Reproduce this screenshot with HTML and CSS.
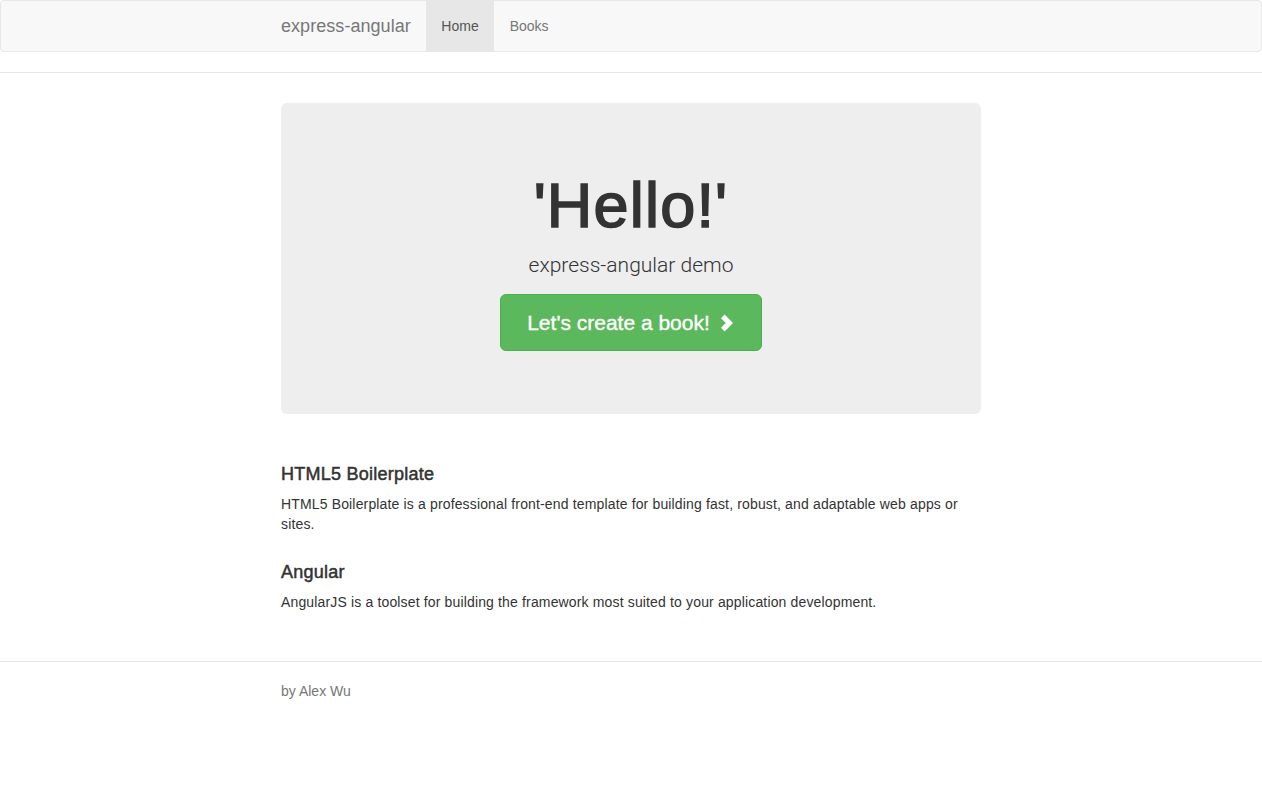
FILE: index.html
```html
<!DOCTYPE html>
<html lang="en">
<head>
<meta charset="utf-8">
<title>express-angular</title>
<link rel="stylesheet" href="styles.css">
</head>
<body>
<div class="header">
  <nav class="navbar">
    <div class="container nav-inner">
      <a class="brand" href="#">express-angular</a>
      <ul class="nav">
        <li class="active"><a href="#">Home</a></li>
        <li><a href="#">Books</a></li>
      </ul>
    </div>
  </nav>
</div>

<div class="container">
  <div class="jumbotron">
    <h1>'Hello!'</h1>
    <p class="lead">express-angular demo</p>
    <div class="cta">
      <a class="btn" href="#">Let's create a book!
        <svg class="chev" width="14" height="18" viewBox="0 0 14 18" aria-hidden="true"><polygon points="1,4.2 4.6,0.6 13,9 4.6,17.4 1,13.8 5.8,9" fill="#fff"/></svg>
      </a>
    </div>
  </div>

  <div class="marketing">
    <h4>HTML5 Boilerplate</h4>
    <p>HTML5 Boilerplate is a professional front-end template for building fast, robust, and adaptable web apps or sites.</p>
    <h4>Angular</h4>
    <p>AngularJS is a toolset for building the framework most suited to your application development.</p>
  </div>
</div>

<div class="footer">
  <div class="container">
    <p>by Alex Wu</p>
  </div>
</div>
</body>
</html>
```

FILE: styles.css
```css
* { box-sizing: border-box; }

body {
  margin: 0;
  font-family: "Liberation Sans", Arial, sans-serif;
  font-size: 14px;
  line-height: 20px;
  color: #333;
  background: #fff;
}

a { text-decoration: none; }

.container {
  width: 730px;
  margin: 0 auto;
  padding: 0 15px;
}

.header {
  border-bottom: 1px solid #e5e5e5;
}

.navbar {
  margin-bottom: 20px;
  background: #f8f8f8;
  border: 1px solid #e7e7e7;
  border-radius: 4px;
  height: 52px;
}

.nav-inner {
  display: flex;
  align-items: stretch;
  height: 50px;
}

.brand {
  margin-left: -15px;
  padding: 15px;
  font-size: 18px;
  line-height: 20px;
  letter-spacing: 0.05px;
  color: #777;
}

.nav {
  display: flex;
  list-style: none;
  margin: 0;
  padding: 0;
}

.nav a {
  display: block;
  padding: 15px 15.5px;
  line-height: 20px;
  color: #777;
}

.nav .active a {
  background: #e7e7e7;
  color: #555;
}

.jumbotron {
  margin-top: 30px;
  margin-bottom: 30px;
  padding: 48px 60px;
  background: #eee;
  border-radius: 6px;
  text-align: center;
}

.jumbotron h1 {
  margin: 20px 0 10px;
  font-size: 63px;
  line-height: 69px;
  font-weight: 400;
  letter-spacing: 1.2px;
  -webkit-text-stroke: 1.6px #333;
  color: #333;
}

.lead {
  margin: 0 0 14px;
  font-family: Roboto, "Liberation Sans", sans-serif;
  font-size: 21px;
  line-height: 30px;
  font-weight: 300;
  color: #333;
}

.cta {
  display: flex;
  justify-content: center;
  margin-bottom: 15px;
}

.btn {
  display: flex;
  align-items: center;
  gap: 10px;
  padding: 14px 27px 14px 26px;
  font-size: 21px;
  line-height: 27px;
  -webkit-text-stroke: 0.35px #fff;
  color: #fff;
  background: #5cb85c;
  border: 1px solid #4cae4c;
  border-radius: 6px;
}

.chev { display: block; }

.marketing {
  margin: 40px 0;
  display: flow-root;
}

.marketing h4 {
  margin: 10px 0 10px;
  font-size: 18px;
  line-height: 20px;
  font-weight: 400;
  letter-spacing: 0.25px;
  -webkit-text-stroke: 0.5px #333;
  color: #333;
}

.marketing p {
  margin: 0 0 10px;
  letter-spacing: 0.15px;
}

.marketing p + h4 {
  margin-top: 28px;
}

.marketing::after {
  content: "";
  display: block;
  height: 9px;
}

.marketing p:last-child { margin-bottom: 0; }

.footer {
  border-top: 1px solid #e5e5e5;
  padding-top: 19px;
  color: #777;
}

.footer p {
  margin: 0 0 10px;
}
```
